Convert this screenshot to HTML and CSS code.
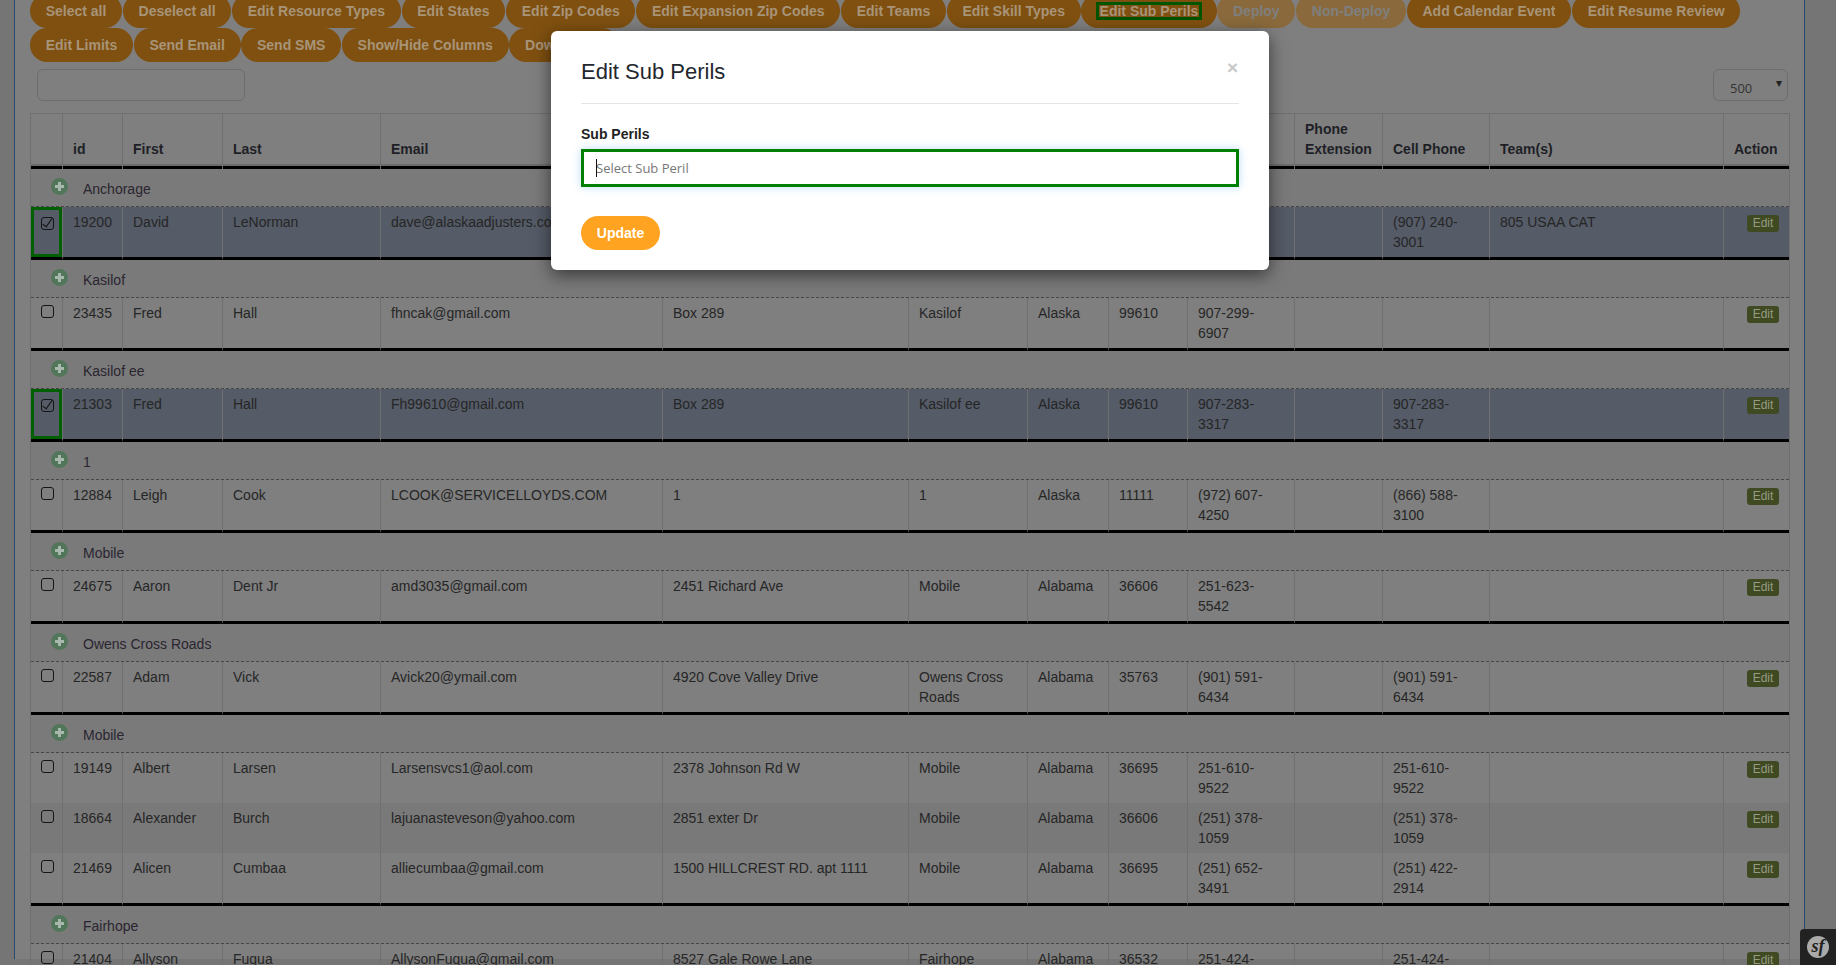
FILE: index.html
```html
<!DOCTYPE html>
<html>

<head>
	<meta charset="utf-8">
	<title>Edit Sub Perils</title>
	<link rel="stylesheet" href="styles.css">
</head>

<body>
	<div class="panel">
		<div class="toolbar">
			<a class="pill">Select all</a>
			<a class="pill">Deselect all</a>
			<a class="pill">Edit Resource Types</a>
			<a class="pill">Edit States</a>
			<a class="pill">Edit Zip Codes</a>
			<a class="pill">Edit Expansion Zip Codes</a>
			<a class="pill">Edit Teams</a>
			<a class="pill">Edit Skill Types</a>
			<a class="pill"><span class="focused">Edit Sub Perils</span></a>
			<a class="pill off">Deploy</a>
			<a class="pill off">Non-Deploy</a>
			<a class="pill">Add Calendar Event</a>
			<a class="pill">Edit Resume Review</a>
			<a class="pill">Edit Limits</a>
			<a class="pill">Send Email</a>
			<a class="pill">Send SMS</a>
			<a class="pill">Show/Hide Columns</a>
			<a class="pill">Download ▾</a>
		</div>

		<div class="filters">
			<input class="search" type="text">
			<div class="page-size">500<span class="arrow">▾</span></div>
		</div>

		<table class="grid">
			<colgroup>
				<col class="c-check">
				<col class="c-id">
				<col class="c-first">
				<col class="c-last">
				<col class="c-email">
				<col class="c-address">
				<col class="c-city">
				<col class="c-state">
				<col class="c-zip">
				<col class="c-phone">
				<col class="c-ext">
				<col class="c-cell">
				<col class="c-team">
				<col class="c-action">
			</colgroup>
			<thead>
				<tr>
					<th></th>
					<th>id</th>
					<th>First</th>
					<th>Last</th>
					<th>Email</th>
					<th>Address</th>
					<th>City</th>
					<th>State</th>
					<th>Zip</th>
					<th>Phone</th>
					<th>Phone Extension</th>
					<th>Cell Phone</th>
					<th>Team(s)</th>
					<th>Action</th>
				</tr>
			</thead>
			<tbody>
				<tr class="group"><td colspan="14"><div class="group-head"><span class="plus"></span>Anchorage</div></td></tr>
				<tr class="picked last">
					<td class="check-on"><input class="tick" type="checkbox" checked></td>
					<td>19200</td><td>David</td><td>LeNorman</td><td>dave@alaskaadjusters.com</td><td>3240 Penland Pkwy</td><td>Anchorage</td><td>Alaska</td><td>99508</td><td>(907) 240-3001</td><td></td><td>(907) 240-3001</td><td>805 USAA CAT</td>
					<td class="act"><a class="edit">Edit</a></td>
				</tr>

				<tr class="group"><td colspan="14"><div class="group-head"><span class="plus"></span>Kasilof</div></td></tr>
				<tr class="last">
					<td><input class="tick" type="checkbox"></td>
					<td>23435</td><td>Fred</td><td>Hall</td><td>fhncak@gmail.com</td><td>Box 289</td><td>Kasilof</td><td>Alaska</td><td>99610</td><td>907-299-6907</td><td></td><td></td><td></td>
					<td class="act"><a class="edit">Edit</a></td>
				</tr>

				<tr class="group"><td colspan="14"><div class="group-head"><span class="plus"></span>Kasilof ee</div></td></tr>
				<tr class="picked last">
					<td class="check-on"><input class="tick" type="checkbox" checked></td>
					<td>21303</td><td>Fred</td><td>Hall</td><td>Fh99610@gmail.com</td><td>Box 289</td><td>Kasilof ee</td><td>Alaska</td><td>99610</td><td>907-283-3317</td><td></td><td>907-283-3317</td><td></td>
					<td class="act"><a class="edit">Edit</a></td>
				</tr>

				<tr class="group"><td colspan="14"><div class="group-head"><span class="plus"></span>1</div></td></tr>
				<tr class="last">
					<td><input class="tick" type="checkbox"></td>
					<td>12884</td><td>Leigh</td><td>Cook</td><td>LCOOK@SERVICELLOYDS.COM</td><td>1</td><td>1</td><td>Alaska</td><td>11111</td><td>(972) 607-4250</td><td></td><td>(866) 588-3100</td><td></td>
					<td class="act"><a class="edit">Edit</a></td>
				</tr>

				<tr class="group"><td colspan="14"><div class="group-head"><span class="plus"></span>Mobile</div></td></tr>
				<tr class="last">
					<td><input class="tick" type="checkbox"></td>
					<td>24675</td><td>Aaron</td><td>Dent Jr</td><td>amd3035@gmail.com</td><td>2451 Richard Ave</td><td>Mobile</td><td>Alabama</td><td>36606</td><td>251-623-5542</td><td></td><td></td><td></td>
					<td class="act"><a class="edit">Edit</a></td>
				</tr>

				<tr class="group"><td colspan="14"><div class="group-head"><span class="plus"></span>Owens Cross Roads</div></td></tr>
				<tr class="last">
					<td><input class="tick" type="checkbox"></td>
					<td>22587</td><td>Adam</td><td>Vick</td><td>Avick20@ymail.com</td><td>4920 Cove Valley Drive</td><td>Owens Cross Roads</td><td>Alabama</td><td>35763</td><td>(901) 591-6434</td><td></td><td>(901) 591-6434</td><td></td>
					<td class="act"><a class="edit">Edit</a></td>
				</tr>

				<tr class="group"><td colspan="14"><div class="group-head"><span class="plus"></span>Mobile</div></td></tr>
				<tr>
					<td><input class="tick" type="checkbox"></td>
					<td>19149</td><td>Albert</td><td>Larsen</td><td>Larsensvcs1@aol.com</td><td>2378 Johnson Rd W</td><td>Mobile</td><td>Alabama</td><td>36695</td><td>251-610-9522</td><td></td><td>251-610-9522</td><td></td>
					<td class="act"><a class="edit">Edit</a></td>
				</tr>
				<tr class="alt">
					<td><input class="tick" type="checkbox"></td>
					<td>18664</td><td>Alexander</td><td>Burch</td><td>lajuanasteveson@yahoo.com</td><td>2851 exter Dr</td><td>Mobile</td><td>Alabama</td><td>36606</td><td>(251) 378-1059</td><td></td><td>(251) 378-1059</td><td></td>
					<td class="act"><a class="edit">Edit</a></td>
				</tr>
				<tr class="last">
					<td><input class="tick" type="checkbox"></td>
					<td>21469</td><td>Alicen</td><td>Cumbaa</td><td>alliecumbaa@gmail.com</td><td>1500 HILLCREST RD. apt 1111</td><td>Mobile</td><td>Alabama</td><td>36695</td><td>(251) 652-3491</td><td></td><td>(251) 422-2914</td><td></td>
					<td class="act"><a class="edit">Edit</a></td>
				</tr>

				<tr class="group"><td colspan="14"><div class="group-head"><span class="plus"></span>Fairhope</div></td></tr>
				<tr class="last">
					<td><input class="tick" type="checkbox"></td>
					<td>21404</td><td>Allyson</td><td>Fugua</td><td>AllysonFugua@gmail.com</td><td>8527 Gale Rowe Lane</td><td>Fairhope</td><td>Alabama</td><td>36532</td><td>251-424-0000</td><td></td><td>251-424-0000</td><td></td>
					<td class="act"><a class="edit">Edit</a></td>
				</tr>
			</tbody>
		</table>
	</div>

	<div class="modal">
		<h4 class="modal-title">Edit Sub Perils</h4>
		<span class="close">×</span>
		<label class="field-label">Sub Perils</label>
		<div class="field">
			<input class="field-input" type="text" placeholder="Select Sub Peril">
			<span class="caret"></span>
		</div>
		<a class="update">Update</a>
	</div>

	<div class="sf-bar"><span class="sf-logo">sf</span></div>
</body>

</html>
```

FILE: styles.css
```css
html,
body {
	margin: 0;
	height: 100%;
	overflow: hidden;
}

body {
	background-color: #757575;
	font-family: "Liberation Sans", Arial, sans-serif;
	font-size: 14px;
	line-height: 20px;
	color: #262626;
}

.panel {
	box-sizing: border-box;
	width: 1791px;
	height: 100%;
	margin-left: 14px;
	padding: 0 16px 0 15px;
	background-color: #7f7f7f;
	border-left: 1px solid #274a6e;
	border-right: 1px solid #274a6e;
}

.toolbar {
	display: flex;
	flex-wrap: wrap;
	column-gap: 0.75px;
	margin-top: -6px;
}

.pill {
	height: 34px;
	box-sizing: border-box;
	padding: 7px 15.7px;
	border-radius: 17px;
	background-color: #7f5010;
	color: #a89478;
	font-weight: bold;
	white-space: nowrap;
}

.pill.off {
	background-color: #8a6a3c;
	color: #7f7f7f;
}

.focused {
	padding: 0 2.5px;
	outline: 3px solid #005500;
	outline-offset: -2px;
}

.filters {
	display: flex;
	justify-content: space-between;
	margin: 7px 0 12px 7px;
}

.search {
	box-sizing: border-box;
	width: 208px;
	height: 32px;
	background: transparent;
	border: 1px solid #6d6d6d;
	border-radius: 6px;
}

.page-size {
	box-sizing: border-box;
	position: relative;
	width: 75px;
	height: 32px;
	padding: 8px 0 0 16px;
	border: 1px solid #6d6d6d;
	border-radius: 6px;
	color: #333;
	font-family: "Open Sans", sans-serif;
	font-size: 13px;
}

.arrow {
	position: absolute;
	right: 5px;
	top: 3px;
	font-size: 12px;
	color: #222;
}

.grid {
	table-layout: fixed;
	width: 1758px;
	border-collapse: separate;
	border-spacing: 0;
	border-top: 1px solid #6f6f6f;
	border-left: 1px solid #6f6f6f;
	border-right: 1px solid #6f6f6f;
}

.c-check { width: 32px; }
.c-id { width: 60px; }
.c-first { width: 100px; }
.c-last { width: 158px; }
.c-email { width: 282px; }
.c-address { width: 246px; }
.c-city { width: 119px; }
.c-state { width: 81px; }
.c-zip { width: 79px; }
.c-phone { width: 107px; }
.c-ext { width: 88px; }
.c-cell { width: 107px; }
.c-team { width: 234px; }
.c-action { width: 65px; }

.grid th {
	box-sizing: border-box;
	height: 55px;
	padding: 5px 10px 10px 10px;
	text-align: left;
	vertical-align: bottom;
	color: #1e1f26;
	border-right: 1px solid #6f6f6f;
	box-shadow: inset 0 -3px 0 #000, inset 0 -5px 0 #6c6c6c;
}

.grid th:last-child,
.grid td:last-child {
	border-right: 0;
}

.grid td {
	box-sizing: border-box;
	height: 50px;
	padding: 5px 10px;
	vertical-align: top;
	border-right: 1px solid #6f6f6f;
	overflow: hidden;
}

.grid tr.last td {
	height: 53px;
	border-bottom: 3px solid #000;
}

.grid tr.group td {
	height: 38px;
	padding: 10px 0 0 20px;
	background-color: #7a7a7a;
	border-right: 0;
	border-bottom: 1px dashed #474747;
}

.grid tr.alt td {
	background-color: #797979;
}

.grid tr.picked td {
	background-color: #555b67;
}

.group-head {
	display: flex;
	align-items: flex-start;
	gap: 15px;
	color: #2a2530;
}

.plus {
	position: relative;
	flex: none;
	width: 17px;
	height: 17px;
	margin-top: -1px;
	border-radius: 50%;
	background-color: #527659;
}

.plus::before,
.plus::after {
	content: "";
	position: absolute;
	background-color: #a9b8ad;
}

.plus::before {
	left: 7px;
	top: 4px;
	width: 3px;
	height: 9px;
}

.plus::after {
	left: 4px;
	top: 7px;
	width: 9px;
	height: 3px;
}

.grid td:first-child {
	padding: 7px 0 0 10px;
}

.grid tr.group td:first-child {
	padding: 10px 0 0 20px;
}

.grid td.check-on {
	box-shadow: inset 0 0 0 3px #005f00;
}

.tick {
	appearance: none;
	display: block;
	position: relative;
	box-sizing: border-box;
	width: 13px;
	height: 13px;
	margin: 0;
	background: transparent;
	border: 1px solid #151515;
	border-radius: 3px;
}

.tick:checked {
	margin-top: 3px;
}

.tick:checked::after {
	content: "";
	position: absolute;
	left: 3px;
	top: -2px;
	width: 4px;
	height: 10px;
	border: solid #151515;
	border-width: 0 1px 1px 0;
	transform: rotate(35deg);
}

.grid td.act {
	padding: 8px 10px 0 0;
	text-align: right;
}

.edit {
	display: inline-block;
	width: 32px;
	height: 17px;
	background-color: #3f4a22;
	border-radius: 3px;
	color: #969b84;
	font-size: 12px;
	line-height: 17px;
	text-align: center;
	vertical-align: top;
}

.modal {
	position: absolute;
	left: 551px;
	top: 31px;
	box-sizing: border-box;
	width: 718px;
	height: 239px;
	padding: 28px 30px 20px 30px;
	background-color: #fff;
	border-radius: 6px;
	box-shadow: 0 5px 18px rgba(0, 0, 0, .55);
	color: #23272e;
}

.modal-title {
	margin: 0 0 20px 0;
	padding-bottom: 18px;
	border-bottom: 1px solid #e5e5e5;
	font-size: 22px;
	font-weight: normal;
	line-height: 26px;
}

.close {
	position: absolute;
	right: 31px;
	top: 27px;
	color: #c8c8c8;
	font-size: 19px;
	font-weight: bold;
}

.field-label {
	display: block;
	margin-bottom: 5px;
	font-weight: bold;
	color: #222;
}

.field {
	position: relative;
	margin-bottom: 29px;
}

.field-input {
	display: block;
	box-sizing: border-box;
	width: 100%;
	height: 38px;
	padding: 0 12px;
	border: 3px solid #008000;
	outline: 0;
	box-shadow: 0 0 8px rgba(102, 175, 233, .45);
	font-family: "Open Sans", sans-serif;
	font-size: 13px;
}

.field-input::placeholder {
	color: #777;
}

.caret {
	position: absolute;
	left: 15px;
	top: 10px;
	width: 1px;
	height: 18px;
	background-color: #111;
}

.update {
	display: block;
	box-sizing: border-box;
	width: 79px;
	height: 34px;
	padding-top: 7px;
	border-radius: 17px;
	background-color: #ffa320;
	color: #fff;
	font-weight: bold;
	text-align: center;
}

.sf-bar {
	position: fixed;
	right: 0;
	bottom: 0;
	width: 36px;
	height: 36px;
	background-color: #222;
	border-top-left-radius: 4px;
}

.sf-logo {
	position: absolute;
	left: 7px;
	top: 7px;
	width: 22px;
	height: 22px;
	border-radius: 50%;
	background-color: #aaa;
	color: #222;
	font-family: "Liberation Serif", serif;
	font-size: 18px;
	font-style: italic;
	font-weight: bold;
	line-height: 21px;
	text-align: center;
}
```
